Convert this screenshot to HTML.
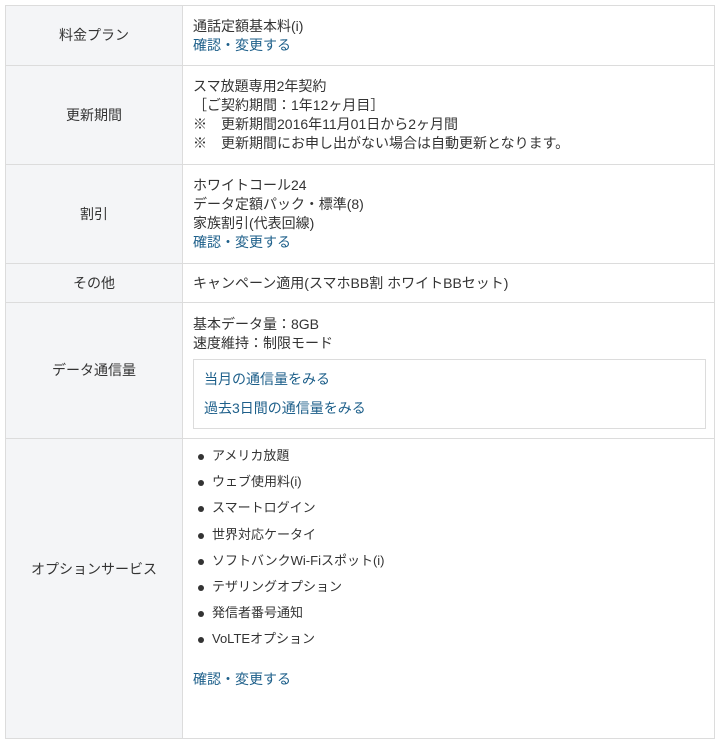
<!DOCTYPE html>
<html><head><meta charset="utf-8"><style>
*{margin:0;padding:0;box-sizing:border-box}
body{width:721px;height:699px;overflow:hidden;background:#fff;font-family:"Liberation Sans","Noto Sans CJK JP",sans-serif;color:#333;font-size:14px;line-height:19px}
table{position:absolute;left:5px;top:5px;border-collapse:collapse;width:710px}
td{border:1px solid #dcdcdc;vertical-align:middle}
td.l{width:177px;background:#f4f5f7;text-align:center}
td.c{padding:0 10px}
a{color:#1d5f8a;text-decoration:none}
.box{border:1px solid #dcdcdc;margin-top:6px;margin-right:-2px;padding:5px 10px 5px}
.box div{line-height:29px}
ul{list-style:none;font-size:13px}
ul li{position:relative;padding-left:19px;line-height:26.2px}
ul li:before{content:"";position:absolute;left:5px;top:11px;width:6px;height:6px;border-radius:50%;background:#333}
</style></head><body>
<table>
<tr style="height:60px"><td class="l">料金プラン</td><td class="c">通話定額基本料(i)<br><a>確認・変更する</a></td></tr>
<tr style="height:99px"><td class="l">更新期間</td><td class="c">スマ放題専用2年契約<br>［ご契約期間：1年12ヶ月目］<br>※　更新期間2016年11月01日から2ヶ月間<br>※　更新期間にお申し出がない場合は自動更新となります。</td></tr>
<tr style="height:99px"><td class="l">割引</td><td class="c">ホワイトコール24<br>データ定額パック・標準(8)<br>家族割引(代表回線)<br><a>確認・変更する</a></td></tr>
<tr style="height:39px"><td class="l">その他</td><td class="c">キャンペーン適用(スマホBB割 ホワイトBBセット)</td></tr>
<tr style="height:136px"><td class="l">データ通信量</td><td class="c" style="padding-top:3px">基本データ量：8GB<br>速度維持：制限モード<div class="box"><div><a>当月の通信量をみる</a></div><div><a>過去3日間の通信量をみる</a></div></div></td></tr>
<tr style="height:300px"><td class="l" style="vertical-align:top;padding-top:121px">オプションサービス</td><td class="c" style="vertical-align:top;padding-top:4px"><ul>
<li>アメリカ放題</li><li>ウェブ使用料(i)</li><li>スマートログイン</li><li>世界対応ケータイ</li><li>ソフトバンクWi-Fiスポット(i)</li><li>テザリングオプション</li><li>発信者番号通知</li><li>VoLTEオプション</li></ul>
<div style="margin-top:17px"><a>確認・変更する</a></div></td></tr>
</table>
</body></html>
